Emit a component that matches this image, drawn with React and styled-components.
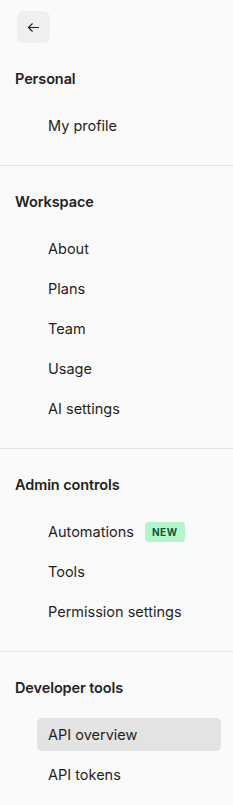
import React from 'react';
import styled, { createGlobalStyle } from 'styled-components';

const GlobalStyle = createGlobalStyle`
  body {
    margin: 0;
    background: #fafafa;
    font-family: Inter, "Noto Sans", sans-serif;
    color: #1f1f1f;
  }
`;

const Sidebar = styled.nav`
  width: 233px;
  min-height: 805px;
  background: #fafafa;
  display: flex;
  flex-direction: column;
`;

const Top = styled.div`
  padding: 11px 0 0 17px;
`;

const BackButton = styled.button`
  width: 33px;
  height: 32px;
  border: none;
  border-radius: 7px;
  background: #efefef;
  display: flex;
  align-items: center;
  justify-content: center;
  padding: 0;
  color: #222;
  cursor: pointer;
`;

const Section = styled.section`
  padding: 26px 0 23px;
  border-bottom: ${p => (p.last ? 'none' : '1px solid #e2e2e2')};
`;

const Heading = styled.h3`
  margin: 0 0 20px 15px;
  height: 20px;
  line-height: 20px;
  font-size: 14.5px;
  font-weight: 600;
  letter-spacing: -0.1px;
  color: #222;
`;

const List = styled.ul`
  list-style: none;
  margin: 0;
  padding: 0;
  display: flex;
  flex-direction: column;
  gap: 7px;
`;

const Item = styled.li`
  margin: 0 12px 0 37px;
  height: 33px;
  padding-left: 11px;
  border-radius: 5px;
  display: flex;
  align-items: center;
  gap: 11px;
  font-size: 14.5px;
  font-weight: 400;
  color: #1f1f1f;
  background: ${p => (p.active ? '#e3e3e3' : 'transparent')};
`;

const Badge = styled.span`
  height: 20px;
  padding: 0 7px;
  border-radius: 4px;
  background: #b5f5cd;
  color: #0f5a31;
  font-size: 10px;
  font-weight: 700;
  letter-spacing: 0.6px;
  display: flex;
  align-items: center;
`;

const sections = [
  { title: 'Personal', items: [{ label: 'My profile' }] },
  {
    title: 'Workspace',
    items: [{ label: 'About' }, { label: 'Plans' }, { label: 'Team' }, { label: 'Usage' }, { label: 'AI settings' }],
  },
  {
    title: 'Admin controls',
    items: [{ label: 'Automations', badge: 'NEW' }, { label: 'Tools' }, { label: 'Permission settings' }],
  },
  {
    title: 'Developer tools',
    items: [{ label: 'API overview', active: true }, { label: 'API tokens' }],
  },
];

const App = () => {
  return (
    <>
      <GlobalStyle />
      <Sidebar>
        <Top>
          <BackButton aria-label="Back">
            <svg width="15" height="15" viewBox="0 0 24 24" fill="none" stroke="currentColor" strokeWidth="1.8" strokeLinecap="round" strokeLinejoin="round">
              <path d="M20 12H4" />
              <path d="M10 6l-6 6 6 6" />
            </svg>
          </BackButton>
        </Top>
        {sections.map((s, i) => (
          <Section key={s.title} last={i === sections.length - 1}>
            <Heading>{s.title}</Heading>
            <List>
              {s.items.map(it => (
                <Item key={it.label} active={it.active}>
                  {it.label}
                  {it.badge && <Badge>{it.badge}</Badge>}
                </Item>
              ))}
            </List>
          </Section>
        ))}
      </Sidebar>
    </>
  );
};

export default App;
